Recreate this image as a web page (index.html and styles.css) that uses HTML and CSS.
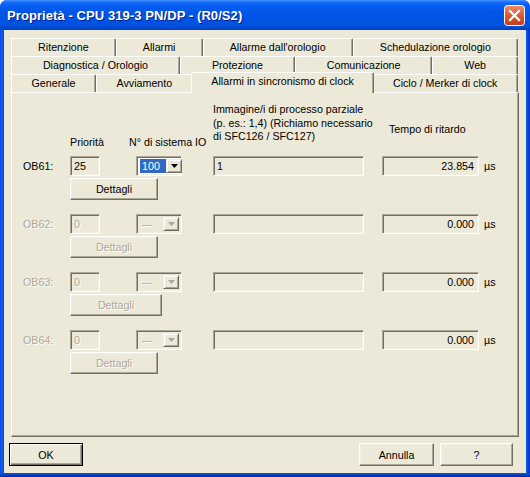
FILE: index.html
```html
<!DOCTYPE html>
<html lang="it">
<head>
<meta charset="utf-8">
<title>Proprietà - CPU 319-3 PN/DP - (R0/S2)</title>
<link rel="stylesheet" href="styles.css">
</head>
<body>
<div class="window">
  <div class="titlebar">
    <span class="title">Proprietà - CPU 319-3 PN/DP - (R0/S2)</span>
    <span class="close" aria-label="Chiudi">
      <svg width="21" height="21" viewBox="0 0 21 21">
        <defs>
          <linearGradient id="cg" x1="0" y1="0" x2="0" y2="1">
            <stop offset="0" stop-color="#F08C6E"/>
            <stop offset="0.5" stop-color="#DC5A37"/>
            <stop offset="1" stop-color="#C23A18"/>
          </linearGradient>
        </defs>
        <rect x="0.5" y="0.5" width="20" height="20" rx="3" ry="3" fill="url(#cg)" stroke="#FFFFFF"/>
        <path d="M6 6 L15 15 M15 6 L6 15" stroke="#FFFFFF" stroke-width="2.2" stroke-linecap="square"/>
      </svg>
    </span>
  </div>
  <div class="frame">
    <div class="client">
      <div class="tabs">
        <div class="tabrow">
          <div class="tab">Ritenzione</div>
          <div class="tab">Allarmi</div>
          <div class="tab">Allarme dall'orologio</div>
          <div class="tab">Schedulazione orologio</div>
        </div>
        <div class="tabrow">
          <div class="tab">Diagnostica / Orologio</div>
          <div class="tab">Protezione</div>
          <div class="tab">Comunicazione</div>
          <div class="tab">Web</div>
        </div>
        <div class="tabrow last">
          <div class="tab">Generale</div>
          <div class="tab">Avviamento</div>
          <div class="tab sel">Allarmi in sincronismo di clock</div>
          <div class="tab">Ciclo / Merker di clock</div>
        </div>
      </div>

      <div class="panel">
        <div class="grid header">
          <div class="h-prio">Priorità</div>
          <div class="h-sys">N° di sistema IO</div>
          <div class="h-img">Immagine/i di processo parziale<br>(p. es.: 1,4) (Richiamo necessario<br>di SFC126 / SFC127)</div>
          <div class="h-tempo">Tempo di ritardo</div>
        </div>

        <div class="obs">
          <div class="grid ob">
            <div class="ob-label">OB61:</div>
            <div class="field c-prio">25</div>
            <div class="combo c-sys"><span class="combo-text"><span class="hl">100</span></span><span class="combo-btn"><svg width="7" height="4" viewBox="0 0 7 4"><path d="M0 0H7L3.5 4Z" fill="#000"/></svg></span></div>
            <div class="field c-img">1</div>
            <div class="field num c-tempo">23.854</div>
            <div class="unit">µs</div>
            <div class="btn det">Dettagli</div>
          </div>

          <div class="grid ob off">
            <div class="ob-label">OB62:</div>
            <div class="field c-prio">0</div>
            <div class="combo c-sys"><span class="combo-text">---</span><span class="combo-btn"><svg width="7" height="4" viewBox="0 0 7 4"><path d="M0 0H7L3.5 4Z" fill="#ACA899"/></svg></span></div>
            <div class="field c-img"></div>
            <div class="field num c-tempo">0.000</div>
            <div class="unit">µs</div>
            <div class="btn det">Dettagli</div>
          </div>

          <div class="grid ob off">
            <div class="ob-label">OB63:</div>
            <div class="field c-prio">0</div>
            <div class="combo c-sys"><span class="combo-text">---</span><span class="combo-btn"><svg width="7" height="4" viewBox="0 0 7 4"><path d="M0 0H7L3.5 4Z" fill="#ACA899"/></svg></span></div>
            <div class="field c-img"></div>
            <div class="field num c-tempo">0.000</div>
            <div class="unit">µs</div>
            <div class="btn det wide">Dettagli</div>
          </div>

          <div class="grid ob off">
            <div class="ob-label">OB64:</div>
            <div class="field c-prio">0</div>
            <div class="combo c-sys"><span class="combo-text">---</span><span class="combo-btn"><svg width="7" height="4" viewBox="0 0 7 4"><path d="M0 0H7L3.5 4Z" fill="#ACA899"/></svg></span></div>
            <div class="field c-img"></div>
            <div class="field num c-tempo">0.000</div>
            <div class="unit">µs</div>
            <div class="btn det">Dettagli</div>
          </div>
        </div>
      </div>

      <div class="footer">
        <div class="btn default ok">OK</div>
        <div class="btn annulla">Annulla</div>
        <div class="btn help">?</div>
      </div>
    </div>
  </div>
</div>
</body>
</html>
```
FILE: styles.css
```css
* { box-sizing: border-box; }

html, body {
  margin: 0;
  padding: 0;
  background: #FFFFFF;
}

body {
  font-family: "Liberation Sans", Arial, sans-serif;
  font-size: 10.7px;
  color: #000000;
}

.window {
  width: 530px;
  height: 477px;
  display: flex;
  flex-direction: column;
  border-radius: 7px 7px 0 0;
  overflow: hidden;
  background: #0054E3;
}

/* ---------- title bar ---------- */
.titlebar {
  flex: none;
  height: 30px;
  display: flex;
  align-items: center;
  justify-content: space-between;
  padding: 0 5px 0 7px;
  background: linear-gradient(to bottom,
    #4A96FF 0px, #1570FA 2px, #0860F2 5px, #0055E6 12px,
    #0054E3 20px, #0050DC 26px, #0044C8 29px, #003CB8 30px);
}

.title {
  color: #FFFFFF;
  font-weight: bold;
  font-size: 13px;
  letter-spacing: 0.08px;
  text-shadow: 1px 1px 0 #0A1E8C;
  margin-top: 1px;
}

.close {
  width: 21px;
  height: 21px;
  display: block;
  margin-top: 1px;
}
.close svg { display: block; }

/* ---------- frame & client ---------- */
.frame {
  flex: 1;
  display: flex;
  padding: 0 4px 4px;
  background: linear-gradient(to right, #0831D9 0, #166AEE 1px, #0B5BE8 2px, #0450D6 3px, #0450D6 4px, #0055E5 5px, #0055E5 525px, #0450D6 526px, #0B5BE8 527px, #0A4BD0 528px, #0831D9 529px);
  position: relative;
}

.frame::after {
  content: "";
  position: absolute;
  left: 0;
  right: 0;
  bottom: 0;
  height: 4px;
  background: linear-gradient(to bottom, #0450D6 0, #0B4FD8 1px, #0A3FC0 2px, #0831A8 3px);
}

.client {
  flex: 1;
  display: flex;
  flex-direction: column;
  background: #ECE9D8;
  padding: 8px 7px 7px 7px;
}

/* ---------- tabs ---------- */
.tabs {
  flex: none;
  width: 507px;
  display: flex;
  flex-direction: column;
}

.tabrow {
  display: flex;
  height: 18px;
  align-items: flex-end;
}

.tab {
  flex: 1 1 auto;
  height: 18px;
  padding: 0 6px;
  text-align: center;
  line-height: 17px;
  white-space: nowrap;
  background: #ECE9D8;
  border-top: 1px solid #FFFFFF;
  border-left: 1px solid #FFFFFF;
  border-right: 1px solid #716F64;
  box-shadow: inset -1px 0 0 #ACA899;
  border-radius: 2px 2px 0 0;
}

.tab.sel {
  height: 21px;
  margin: -2px -2px -1px -2px;
  line-height: 17px;
  position: relative;
  z-index: 1;
}

/* ---------- panel ---------- */
.panel {
  flex: none;
  height: 345px;
  border: 1px solid;
  border-color: #FFFFFF #716F64 #716F64 #FFFFFF;
  box-shadow: inset -1px -1px 0 #ACA899;
  padding: 10px 0 0 11px;
}

.grid {
  display: grid;
  grid-template-columns: 47px 30px 36px 46px 31px 151px 18px 97px 5px auto;
}

.header {
  height: 49px;
  margin-bottom: 4px;
  line-height: 13px;
}

.h-img {
  grid-column: 6 / 9;
  grid-row: 1;
  align-self: start;
  line-height: 13.5px;
  white-space: nowrap;
}

.h-prio {
  grid-column: 2 / 4;
  grid-row: 1;
  align-self: end;
  margin-bottom: 3px;
  white-space: nowrap;
}

.h-sys {
  grid-column: 4 / 6;
  grid-row: 1;
  align-self: end;
  margin-bottom: 3px;
  margin-left: -7px;
  white-space: nowrap;
}

.h-tempo {
  grid-column: 8 / 11;
  grid-row: 1;
  align-self: start;
  margin-top: 20px;
  margin-left: 7px;
  white-space: nowrap;
}

.obs {
  display: flex;
  flex-direction: column;
  gap: 14px;
}

.ob {
  grid-template-rows: 20px 22px;
  row-gap: 2px;
}

.ob-label {
  grid-column: 1;
  grid-row: 1;
  align-self: center;
  line-height: 13px;
}

.field {
  grid-row: 1;
  height: 20px;
  background: #ECE9D8;
  border: 1px solid;
  border-color: #ACA899 #FFFFFF #FFFFFF #ACA899;
  box-shadow: inset 1px 1px 0 #716F64, inset -1px -1px 0 #F1EFE2;
  padding: 0 3px;
  line-height: 18px;
  white-space: nowrap;
  overflow: hidden;
}

.num {
  text-align: right;
  padding-right: 4px;
}

.c-prio { grid-column: 2; }
.c-sys { grid-column: 4; }
.c-img { grid-column: 6; }
.c-tempo { grid-column: 8; }

.unit {
  grid-column: 10;
  grid-row: 1;
  align-self: center;
  line-height: 13px;
}

.combo {
  grid-row: 1;
  height: 20px;
  display: flex;
  align-items: stretch;
  background: #FFFFFF;
  border: 1px solid;
  border-color: #ACA899 #FFFFFF #FFFFFF #ACA899;
  box-shadow: inset 1px 1px 0 #716F64, inset -1px -1px 0 #F1EFE2;
  padding: 2px;
}

.combo-text {
  flex: 1;
  display: flex;
  align-items: center;
  line-height: 14px;
  padding-left: 1px;
}

.hl {
  display: block;
  background: #316AC5;
  color: #FFFFFF;
  padding: 0 3px 0 2px;
  height: 14px;
  width: 26px;
}

.combo-btn {
  flex: none;
  width: 16px;
  display: flex;
  align-items: center;
  justify-content: center;
  background: #ECE9D8;
  border: 1px solid;
  border-color: #F1EFE2 #716F64 #716F64 #F1EFE2;
  box-shadow: inset 1px 1px 0 #FFFFFF, inset -1px -1px 0 #ACA899;
}
.combo-btn svg { display: block; }

/* ---------- buttons ---------- */
.btn {
  display: flex;
  align-items: center;
  justify-content: center;
  background: #ECE9D8;
  border: 1px solid;
  border-color: #FFFFFF #716F64 #716F64 #FFFFFF;
  box-shadow: inset -1px -1px 0 #ACA899, inset 1px 1px 0 #F1EFE2;
  white-space: nowrap;
}

.det {
  grid-column: 2 / 6;
  grid-row: 2;
  width: 88px;
  height: 22px;
  justify-self: start;
}
.det.wide { width: 92px; }

.btn.default {
  border: 1px solid #000000;
  box-shadow: inset 1px 1px 0 #FFFFFF, inset -1px -1px 0 #716F64, inset -2px -2px 0 #ACA899;
}

/* ---------- disabled rows ---------- */
.off .ob-label,
.off .c-prio,
.off .combo-text,
.off .btn {
  color: #ACA899;
  text-shadow: 1px 1px 0 #FFFFFF;
}
.off .combo { background: #ECE9D8; }
.off .combo-text { padding-left: 3px; }

/* ---------- footer ---------- */
.footer {
  flex: none;
  display: flex;
  gap: 6px;
  margin: 6px 6px 0 -2px;
}

.footer .btn { height: 23px; }
.ok { width: 74px; margin-right: auto; }
.annulla { width: 75px; }
.help { width: 73px; }
```
